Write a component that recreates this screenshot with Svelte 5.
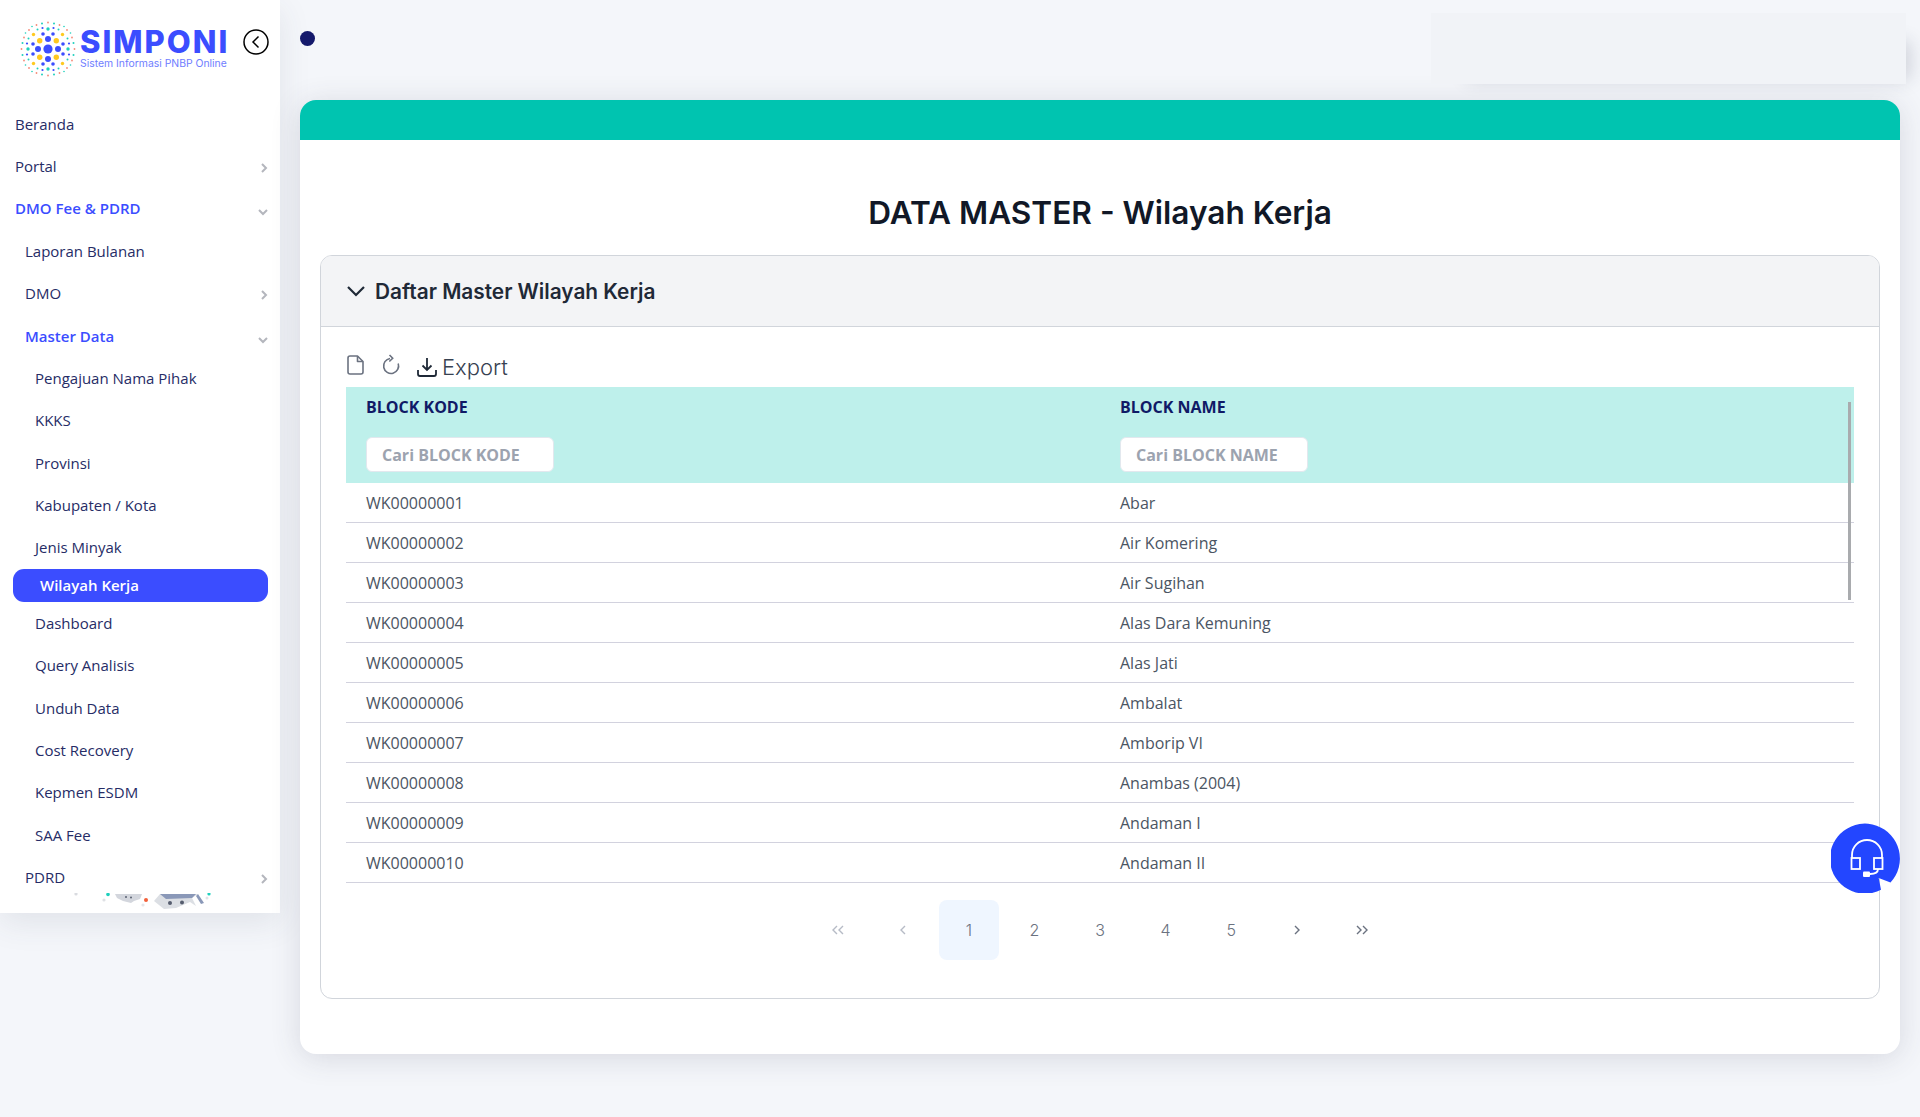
<script>
  const blue = "#3b4dff";
  const yellow = "#ffc91f";
  const teal = "#1fd0bd";
  const coral = "#f58a78";

  // one octant of the logo, mirrored into the other seven
  const seeds = [
    [10, 0, 3, blue],
    [8.3, 8.3, 2.7, yellow],
    [15, 5, 1.8, blue],
    [14.5, 14.5, 1.7, yellow],
    [20, 0, 1.7, teal],
    [21, 5.5, 1.1, blue],
    [19.5, 10.5, 1, teal],
    [19, 19, 0.9, coral],
    [26.5, 0, 0.9, coral],
    [25.5, 6, 1, teal],
    [24, 11.5, 0.9, coral],
    [22.5, 16, 0.8, teal],
  ];
  const dots = [[0, 0, 4.6, blue]];
  for (const [x, y, r, c] of seeds) {
    const seen = new Set();
    for (const [a, b] of [[x, y], [y, x]]) {
      for (const sx of [1, -1]) {
        for (const sy of [1, -1]) {
          const key = a * sx + "," + b * sy;
          if (!seen.has(key)) {
            seen.add(key);
            dots.push([a * sx, b * sy, r, c]);
          }
        }
      }
    }
  }

  const menu = [
    { label: "Beranda", level: 1 },
    { label: "Portal", level: 1, arrow: "right" },
    { label: "DMO Fee & PDRD", level: 1, arrow: "down", open: true },
    { label: "Laporan Bulanan", level: 2 },
    { label: "DMO", level: 2, arrow: "right" },
    { label: "Master Data", level: 2, arrow: "down", open: true },
    { label: "Pengajuan Nama Pihak", level: 3 },
    { label: "KKKS", level: 3 },
    { label: "Provinsi", level: 3 },
    { label: "Kabupaten / Kota", level: 3 },
    { label: "Jenis Minyak", level: 3 },
    { label: "Wilayah Kerja", level: 3, active: true },
    { label: "Dashboard", level: 3 },
    { label: "Query Analisis", level: 3 },
    { label: "Unduh Data", level: 3 },
    { label: "Cost Recovery", level: 3 },
    { label: "Kepmen ESDM", level: 3 },
    { label: "SAA Fee", level: 3 },
    { label: "PDRD", level: 2, arrow: "right" },
  ];

  const rows = [
    ["WK00000001", "Abar"],
    ["WK00000002", "Air Komering"],
    ["WK00000003", "Air Sugihan"],
    ["WK00000004", "Alas Dara Kemuning"],
    ["WK00000005", "Alas Jati"],
    ["WK00000006", "Ambalat"],
    ["WK00000007", "Amborip VI"],
    ["WK00000008", "Anambas (2004)"],
    ["WK00000009", "Andaman I"],
    ["WK00000010", "Andaman II"],
  ];

  const pages = [1, 2, 3, 4, 5];
</script>

<div class="layout">
  <aside class="sidebar">
    <div class="brand">
      <svg class="mark" width="60" height="60" viewBox="-30 -30 60 60">
        {#each dots as d}
          <circle cx={d[0]} cy={d[1]} r={d[2]} fill={d[3]} />
        {/each}
      </svg>
      <div class="brand-text">
        <div class="brand-name">SIMPONI</div>
        <div class="brand-sub">Sistem Informasi PNBP Online</div>
      </div>
      <button class="collapse" aria-label="Tutup menu">
        <svg width="26" height="26" viewBox="0 0 26 26" fill="none" stroke="#000">
          <circle cx="13" cy="13" r="12" stroke-width="1.5" />
          <path d="M15.5 7.5 10 13l5.5 5.5" stroke-width="1.5" />
        </svg>
      </button>
    </div>

    <nav class="menu">
      {#each menu as item}
        <a
          href="#top"
          class="item lv{item.level}"
          class:open={item.open}
          class:active={item.active}
        >
          <span>{item.label}</span>
          {#if item.arrow === "right"}
            <svg class="arrow" width="8" height="12" viewBox="0 0 8 12" fill="none">
              <path d="M2 2l4 4-4 4" />
            </svg>
          {:else if item.arrow === "down"}
            <svg class="arrow down" width="12" height="8" viewBox="0 0 12 8" fill="none">
              <path d="M2 2l4 4 4-4" />
            </svg>
          {/if}
        </a>
      {/each}
    </nav>

    <svg class="art" width="170" height="20" viewBox="0 0 170 20">
      <circle cx="16" cy="1" r="1.6" fill="#d9dbe0" />
      <circle cx="48" cy="1.5" r="1.8" fill="#1fd0bd" />
      <circle cx="44" cy="7" r="1.6" fill="#dfe1e5" />
      <path d="M55 1h27l-2 5-6 2-3 2-8-2-6-3z" fill="#d3d6dd" />
      <circle cx="66" cy="4" r="1" fill="#5a6172" />
      <circle cx="71" cy="4.5" r="1" fill="#5a6172" />
      <circle cx="86" cy="7" r="2" fill="#f2603a" />
      <circle cx="83" cy="12" r="1.6" fill="#e3e5e9" />
      <path d="M94 8l6-7h38l-6 4 4 8-6-4-14 6-12 1z" fill="#dcdfe4" />
      <path d="M100 1h36l-4 4-26 1z" fill="#8a98b8" />
      <path d="M138 1l6 9-3 1-5-8z" fill="#8a98b8" />
      <circle cx="110" cy="10" r="2" fill="#565d6e" />
      <circle cx="122" cy="9.5" r="2" fill="#565d6e" />
      <circle cx="147" cy="5" r="1.5" fill="#e1e3e7" />
      <circle cx="149" cy="1" r="1.6" fill="#1fd0bd" />
    </svg>
  </aside>

  <main class="content">
    <div class="topbar">
      <span class="status"></span>
      <div class="usercard"></div>
    </div>

    <section class="card">
      <div class="card-top"></div>
      <h1>DATA MASTER - Wilayah Kerja</h1>

      <div class="panel">
        <header class="panel-head">
          <svg width="20" height="12" viewBox="0 0 20 12" fill="none" stroke="#1f2937" stroke-width="2.2">
            <path d="M2 2l8 8 8-8" />
          </svg>
          <h2>Daftar Master Wilayah Kerja</h2>
        </header>

        <div class="panel-body">
          <div class="toolbar">
            <svg class="tool" width="20" height="22" viewBox="0 0 20 22" fill="none" stroke="#6b7280" stroke-width="1.6" stroke-linejoin="round">
              <path d="M4 2h7.5L17 7.5V18a2 2 0 0 1-2 2H4a2 2 0 0 1-2-2V4a2 2 0 0 1 2-2z" />
              <path d="M11.5 2v5.5H17" />
            </svg>
            <svg class="tool" width="22" height="22" viewBox="0 0 22 22" fill="none" stroke="#6b7280" stroke-width="1.6">
              <path d="M10 4.5a7.5 7.5 0 1 0 8.2 5" />
              <path d="M9.5 1l3.2 3.3-3.4 3.2" />
            </svg>
            <button class="export">
              <svg width="22" height="22" viewBox="0 0 22 22" fill="none" stroke="#1f2937" stroke-width="1.8">
                <path d="M11 2v12M6.5 9.5 11 14l4.5-4.5" />
                <path d="M2 14v4a2 2 0 0 0 2 2h14a2 2 0 0 0 2-2v-4" />
              </svg>
              <span>Export</span>
            </button>
          </div>

          <div class="table-wrap">
            <table>
              <thead>
                <tr>
                  <th>
                    <div class="th-label">BLOCK KODE</div>
                    <input type="text" placeholder="Cari BLOCK KODE" />
                  </th>
                  <th>
                    <div class="th-label">BLOCK NAME</div>
                    <input type="text" placeholder="Cari BLOCK NAME" />
                  </th>
                </tr>
              </thead>
              <tbody>
                {#each rows as row}
                  <tr>
                    <td>{row[0]}</td>
                    <td>{row[1]}</td>
                  </tr>
                {/each}
              </tbody>
            </table>
            <div class="scrollbar"></div>
          </div>

          <div class="pager">
            <button class="pg off" aria-label="Pertama">
              <svg width="14" height="10" viewBox="0 0 14 10" fill="none"><path d="M6 1 2 5l4 4M12 1 8 5l4 4" /></svg>
            </button>
            <button class="pg off" aria-label="Sebelumnya">
              <svg width="8" height="10" viewBox="0 0 8 10" fill="none"><path d="M6 1 2 5l4 4" /></svg>
            </button>
            {#each pages as p}
              <button class="pg" class:current={p === 1}>{p}</button>
            {/each}
            <button class="pg" aria-label="Berikutnya">
              <svg width="8" height="10" viewBox="0 0 8 10" fill="none"><path d="M2 1l4 4-4 4" /></svg>
            </button>
            <button class="pg" aria-label="Terakhir">
              <svg width="14" height="10" viewBox="0 0 14 10" fill="none"><path d="M2 1l4 4-4 4M8 1l4 4-4 4" /></svg>
            </button>
          </div>
        </div>
      </div>
    </section>
  </main>

  <button class="help" aria-label="Bantuan">
    <svg width="70" height="70" viewBox="0 0 70 70">
      <path d="M47.7 55 59.5 59.5A35 35 0 1 0 50 66.7z" fill="#2346ff" />
      <g fill="none" stroke="#fff" stroke-width="1.8">
        <path d="M21 35v-3a15 15 0 0 1 30 0v3" />
        <rect x="20.5" y="35" width="8.5" height="11" />
        <rect x="43" y="35" width="8.5" height="11" />
        <path d="M47 46c0 3-2 5-8 5" />
      </g>
      <rect x="32" y="48.5" width="7" height="5.5" rx="1" fill="#fff" />
    </svg>
  </button>
</div>

<style>
  :global(body) {
    margin: 0;
    background: #f4f6fa;
    font-family: "Open Sans", sans-serif;
  }
  .layout {
    display: flex;
    align-items: flex-start;
    min-height: 1117px;
  }
  .sidebar {
    width: 280px;
    height: 913px;
    flex: none;
    background: #fff;
    box-shadow: 0 10px 30px rgba(60, 64, 90, 0.1);
    display: flex;
    flex-direction: column;
    overflow: hidden;
  }
  .brand {
    height: 102.4px;
    flex: none;
    display: flex;
    align-items: flex-start;
    padding: 19px 0 0 18px;
    box-sizing: border-box;
  }
  .brand-text {
    margin-left: 2px;
    margin-top: 9px;
    width: 150px;
  }
  .brand-name {
    font-family: Inter, sans-serif;
    font-weight: 800;
    font-size: 31px;
    line-height: 28px;
    color: #3b4dff;
    letter-spacing: 2px;
  }
  .brand-sub {
    font-family: Inter, sans-serif;
    font-size: 10.4px;
    line-height: 14px;
    margin-top: 1px;
    color: #6f7dff;
    white-space: nowrap;
  }
  .collapse {
    margin: 10px 0 0 13px;
    padding: 0;
    border: 0;
    background: none;
    width: 26px;
    height: 26px;
  }
  .menu {
    height: 790.6px;
    flex: none;
    overflow: hidden;
    display: flex;
    flex-direction: column;
  }
  .item {
    height: 42.4px;
    flex: none;
    box-sizing: border-box;
    display: flex;
    align-items: center;
    justify-content: space-between;
    padding-right: 12px;
    font-size: 15px;
    color: #262c66;
    text-decoration: none;
  }
  .lv1 {
    padding-left: 15px;
  }
  .lv2 {
    padding-left: 25px;
  }
  .lv3 {
    padding-left: 35px;
  }
  .item.open {
    color: #3b4dff;
    font-weight: 600;
  }
  .item.active {
    height: 33px;
    margin: 0 12px 0 13px;
    padding-left: 27px;
    border-radius: 11px;
    background: #3b4dff;
    color: #fff;
    font-weight: 600;
  }
  .arrow {
    stroke: #b4b6bd;
    stroke-width: 2;
    margin-top: 4px;
  }
  .arrow.down {
    margin-top: 8px;
    margin-right: -1px;
  }
  .art {
    flex: none;
    margin-left: 60px;
  }
  .content {
    flex: 1;
    min-width: 0;
    padding: 13px 20px 0;
  }
  .topbar {
    display: flex;
    align-items: flex-start;
    justify-content: space-between;
    height: 71px;
    margin-bottom: 16px;
  }
  .status {
    width: 15px;
    height: 15px;
    border-radius: 50%;
    background: #14196b;
    margin-top: 18px;
  }
  .usercard {
    width: 475px;
    height: 71px;
    margin-right: -6px;
    background: #f1f3f7;
    box-shadow: 20px 12px 18px -16px rgba(40, 44, 70, 0.18);
  }
  .card {
    background: #fff;
    border-radius: 16px;
    height: 954px;
    overflow: hidden;
    box-shadow: 0 4px 30px rgba(60, 64, 90, 0.16);
    padding: 0 20px;
    box-sizing: border-box;
  }
  .card-top {
    height: 40px;
    margin: 0 -20px;
    background: #00c4b0;
  }
  h1 {
    margin: 0;
    height: 115px;
    padding-top: 51px;
    box-sizing: border-box;
    text-align: center;
    font-family: Inter, sans-serif;
    font-weight: 600;
    font-size: 31.6px;
    line-height: 44px;
    color: #111827;
  }
  .panel {
    height: 744px;
    box-sizing: border-box;
    border: 1px solid #d1d5db;
    border-radius: 12px;
    overflow: hidden;
  }
  .panel-head {
    height: 71px;
    box-sizing: border-box;
    background: #f3f4f6;
    border-bottom: 1px solid #d1d5db;
    display: flex;
    align-items: center;
    padding-left: 25px;
    gap: 9px;
  }
  h2 {
    margin: 0;
    font-family: Inter, sans-serif;
    font-weight: 600;
    font-size: 20.8px;
    color: #1f2937;
  }
  .panel-body {
    padding: 0 25px;
  }
  .toolbar {
    height: 60px;
    display: flex;
    align-items: center;
    padding: 16px 0 0;
    box-sizing: border-box;
    gap: 14px;
  }
  .export {
    display: flex;
    align-items: center;
    gap: 4px;
    padding: 3px 0 0;
    border: 0;
    background: none;
    font-family: Inter, sans-serif;
    font-weight: 300;
    font-size: 22px;
    color: #374151;
  }
  .table-wrap {
    position: relative;
  }
  table {
    width: 100%;
    border-collapse: collapse;
    table-layout: fixed;
  }
  th {
    height: 95.5px;
    background: #bef0eb;
    padding: 9px 20px 0;
    box-sizing: border-box;
    text-align: left;
    vertical-align: top;
  }
  .th-label {
    font-size: 16px;
    font-weight: 700;
    line-height: 22px;
    color: #101a66;
  }
  input {
    display: block;
    width: 188px;
    height: 35px;
    margin-top: 19px;
    padding: 0 15px;
    box-sizing: border-box;
    border: 1px solid #e2e8ee;
    border-radius: 6px;
    background: #fff;
    font-family: "Open Sans", sans-serif;
    font-size: 16px;
    font-weight: 700;
  }
  input::placeholder {
    color: #9ca3af;
    opacity: 1;
    font-weight: 700;
  }
  td {
    height: 40px;
    padding: 1px 20px 0;
    box-sizing: border-box;
    border-bottom: 1px solid #d2d2de;
    font-size: 16px;
    color: #4b5563;
  }
  .scrollbar {
    position: absolute;
    top: 15px;
    right: 3px;
    width: 3px;
    height: 198px;
    background: #a9abae;
  }
  .pager {
    display: flex;
    justify-content: center;
    gap: 5.6px;
    margin-top: 17px;
  }
  .pg {
    width: 60px;
    height: 60px;
    padding: 0;
    border: 0;
    border-radius: 8px;
    background: none;
    font-family: Inter, sans-serif;
    font-weight: 300;
    font-size: 16px;
    color: #6b7280;
    display: flex;
    align-items: center;
    justify-content: center;
  }
  .pg svg {
    stroke: #6b7280;
    stroke-width: 1.4;
  }
  .pg.off svg {
    stroke: #b6bbc6;
  }
  .pg.current {
    background: #eff6ff;
  }
  .help {
    position: fixed;
    left: 1830.5px;
    top: 823px;
    width: 70px;
    height: 70px;
    padding: 0;
    border: 0;
    background: none;
  }
  .help svg {
    display: block;
  }
</style>
